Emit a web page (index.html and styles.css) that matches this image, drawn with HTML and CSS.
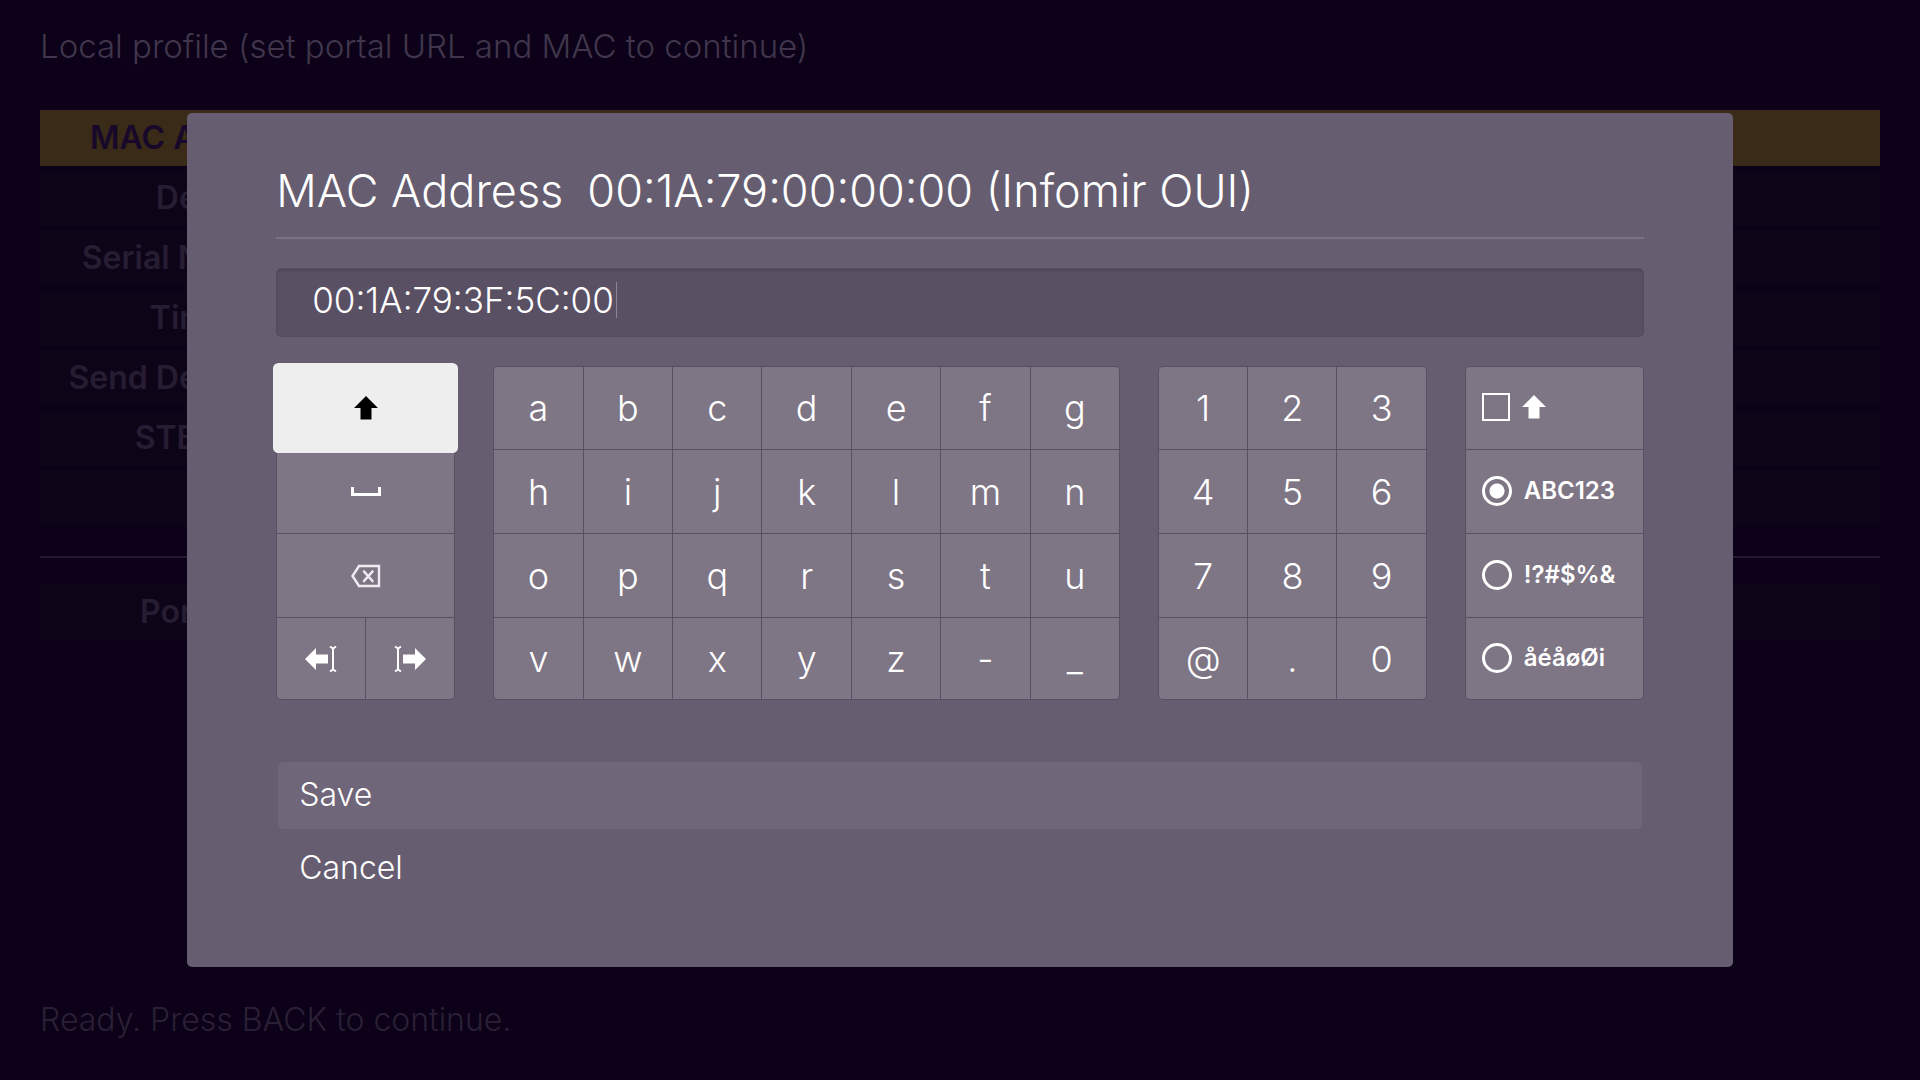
FILE: index.html
```html
<!DOCTYPE html>
<html lang="en">

<head>
    <meta charset="UTF-8">
    <meta name="viewport" content="width=device-width, initial-scale=1.0">
    <title>Local profile</title>
    <link rel="stylesheet" href="styles.css">
</head>

<body>
    <!-- settings page under the dialog -->
    <header class="page-title">Local profile (set portal URL and MAC to continue)</header>
    <main class="settings">
        <ul class="rows">
            <li class="row selected"><span class="label">MAC Address</span></li>
            <li class="row"><span class="label">Device ID</span></li>
            <li class="row"><span class="label">Serial Number</span></li>
            <li class="row"><span class="label">Timezone</span></li>
            <li class="row"><span class="label">Send Device ID</span></li>
            <li class="row"><span class="label">STB Model</span></li>
            <li class="row"></li>
        </ul>
        <hr class="divider">
        <ul class="rows">
            <li class="row"><span class="label">Portal URL</span></li>
        </ul>
    </main>
    <footer class="status">Ready. Press BACK to continue.</footer>

    <!-- keyboard dialog -->
    <div class="overlay">
        <form class="dialog" role="dialog" aria-labelledby="title">
            <h1 class="title" id="title"><span>MAC Address</span><span>00:1A:79:00:00:00 (Infomir OUI)</span></h1>

            <div class="field">
                <input type="text" class="mac" aria-labelledby="title" value="00:1A:79:3F:5C:00">
                <span class="caret"></span>
            </div>

            <div class="keyboard">
                <div class="keys actions">
                    <button type="button" class="key wide focused" aria-label="Shift">
                        <svg width="24" height="24" viewBox="0 0 24 24"><path d="M12 0 24 12H17.500V23.500H6.500V12H0Z" fill="currentColor"/></svg>
                    </button>
                    <button type="button" class="key wide" aria-label="Space">
                        <svg width="30" height="10" viewBox="0 0 30 10"><path d="M1.500 0V7.500H28.500V0" fill="none" stroke="currentColor" stroke-width="3"/></svg>
                    </button>
                    <button type="button" class="key wide" aria-label="Delete">
                        <svg width="30" height="24" viewBox="0 0 30 24"><path d="M8 2H28V22H8L1.500 12Z" fill="none" stroke="#efedf2" stroke-width="2.400"/><path d="M13 7.500 21.500 17M21.500 7.500 13 17" fill="none" stroke="#efedf2" stroke-width="2.600" stroke-linecap="round"/></svg>
                    </button>
                    <button type="button" class="key" aria-label="Cursor left">
                        <svg width="32" height="28" viewBox="0 0 32 28"><path d="M0 14 11 3V9.500H23V18.500H11V25Z" fill="currentColor"/><path d="M25 1.500 28 3.500 31 1.500M28 3V25M25 26.500 28 24.500 31 26.500" fill="none" stroke="currentColor" stroke-width="2"/></svg>
                    </button>
                    <button type="button" class="key" aria-label="Cursor right">
                        <svg width="32" height="28" viewBox="0 0 32 28"><path d="M32 14 21 3V9.500H9V18.500H21V25Z" fill="currentColor"/><path d="M1 1.500 4 3.500 7 1.500M4 3V25M1 26.500 4 24.500 7 26.500" fill="none" stroke="currentColor" stroke-width="2"/></svg>
                    </button>
                </div>

                <div class="keys letters">
                    <button type="button" class="key">a</button>
                    <button type="button" class="key">b</button>
                    <button type="button" class="key">c</button>
                    <button type="button" class="key">d</button>
                    <button type="button" class="key">e</button>
                    <button type="button" class="key">f</button>
                    <button type="button" class="key">g</button>
                    <button type="button" class="key">h</button>
                    <button type="button" class="key">i</button>
                    <button type="button" class="key">j</button>
                    <button type="button" class="key">k</button>
                    <button type="button" class="key">l</button>
                    <button type="button" class="key">m</button>
                    <button type="button" class="key">n</button>
                    <button type="button" class="key">o</button>
                    <button type="button" class="key">p</button>
                    <button type="button" class="key">q</button>
                    <button type="button" class="key">r</button>
                    <button type="button" class="key">s</button>
                    <button type="button" class="key">t</button>
                    <button type="button" class="key">u</button>
                    <button type="button" class="key">v</button>
                    <button type="button" class="key">w</button>
                    <button type="button" class="key">x</button>
                    <button type="button" class="key">y</button>
                    <button type="button" class="key">z</button>
                    <button type="button" class="key">-</button>
                    <button type="button" class="key">_</button>
                </div>

                <div class="keys numbers">
                    <button type="button" class="key">1</button>
                    <button type="button" class="key">2</button>
                    <button type="button" class="key">3</button>
                    <button type="button" class="key">4</button>
                    <button type="button" class="key">5</button>
                    <button type="button" class="key">6</button>
                    <button type="button" class="key">7</button>
                    <button type="button" class="key">8</button>
                    <button type="button" class="key">9</button>
                    <button type="button" class="key">@</button>
                    <button type="button" class="key">.</button>
                    <button type="button" class="key">0</button>
                </div>

                <div class="keys modes">
                    <label class="mode">
                        <input type="checkbox" class="check" aria-label="Caps lock">
                        <svg width="24" height="24" viewBox="0 0 24 24"><path d="M12 0 24 12H17.500V23.500H6.500V12H0Z" fill="currentColor"/></svg>
                    </label>
                    <label class="mode"><input type="radio" name="mode" class="radio" checked>ABC123</label>
                    <label class="mode"><input type="radio" name="mode" class="radio">!?#$%&amp;</label>
                    <label class="mode"><input type="radio" name="mode" class="radio">åéåøØi</label>
                </div>
            </div>

            <div class="buttons">
                <button type="button" class="btn save">Save</button>
                <button type="button" class="btn">Cancel</button>
            </div>
        </form>
    </div>
</body>

</html>
```
FILE: styles.css
```css
* {
    box-sizing: border-box;
}

body {
    margin: 0;
    min-height: 100vh;
    padding: 24px 40px 38px;
    display: flex;
    flex-direction: column;
    background-color: #0c0118;
    font-family: Inter, "Liberation Sans", sans-serif;
    font-weight: 300;
    font-size: 32px;
    line-height: 44px;
}

.page-title {
    color: #40364c;
    font-size: 33px;
}

.settings {
    margin-top: 42px;
}

.rows {
    list-style: none;
    margin: 0;
    padding: 0;
    display: flex;
    flex-direction: column;
    gap: 4px;
}

.row {
    height: 56px;
    display: flex;
    align-items: center;
    background-color: #0e0418;
    color: #271d33;
    font-weight: 600;
}

.row.selected {
    background-color: #3a2a18;
    color: #180829;
}

.label {
    width: 262px;
    text-align: right;
    white-space: nowrap;
}

.divider {
    height: 2px;
    margin: 30px 0 26px;
    border: none;
    background-color: #231a2f;
}

.status {
    margin-top: auto;
    color: #2a2036;
}

/* dialog */
.overlay {
    position: fixed;
    inset: 0;
    display: flex;
    align-items: center;
    justify-content: center;
}

.dialog {
    width: 80.5%;
    padding: 48px 89px 65px;
    border-radius: 5px;
    background-color: #665d70;
    color: #fff;
}

.title {
    margin: 0;
    padding-bottom: 16px;
    display: flex;
    gap: 24px;
    border-bottom: 2px solid #7b7285;
    font-weight: 300;
    font-size: 45px;
    line-height: 60px;
}

.field {
    height: 69px;
    margin-top: 29px;
    padding: 0 35px 6px;
    display: flex;
    align-items: center;
    border: 1px solid #554a5e;
    border-radius: 5px;
    background-color: #5a5064;
    box-shadow: inset 0 2px 2px #50465a;
}

.mac {
    field-sizing: content;
    padding: 0;
    border: none;
    outline: none;
    background: none;
    color: #fff;
    font: inherit;
    font-size: 35px;
}

.caret {
    width: 1px;
    height: 36px;
    margin-left: 2px;
    background-color: #8e8697;
}

.keyboard {
    margin-top: 29px;
    display: grid;
    grid-template-columns: 2fr 7fr 3fr 2fr;
    gap: 38px;
}

.keys {
    display: grid;
    grid-template-rows: 82px 83px 83px 81px;
    gap: 1px;
    border: 1px solid #594f63;
    border-radius: 5px;
    background-color: #594f63;
}

.letters,
.numbers,
.modes {
    overflow: hidden;
}

.actions {
    grid-template-columns: 1fr 1fr;
}

.letters {
    grid-template-columns: repeat(7, 1fr);
}

.numbers {
    grid-template-columns: repeat(3, 1fr);
}

.key {
    padding: 0;
    display: flex;
    align-items: center;
    justify-content: center;
    border: none;
    background-color: #7e7585;
    color: #fff;
    font: inherit;
    font-size: 36px;
}

.actions .key:nth-child(4) {
    border-bottom-left-radius: 4px;
}

.actions .key:nth-child(5) {
    border-bottom-right-radius: 4px;
}

.wide {
    grid-column: span 2;
}

.focused {
    z-index: 1;
    border-radius: 2px;
    background-color: #eee;
    box-shadow: 0 0 0 4px #eee;
    color: #000;
}

.mode {
    padding: 0 0 2px 16px;
    display: flex;
    align-items: center;
    gap: 12px;
    background-color: #7e7585;
    font-weight: 600;
    font-size: 24px;
}

.check,
.radio {
    appearance: none;
    flex: none;
    margin: 0;
    border: 2px solid #fff;
}

.check {
    width: 28px;
    height: 28px;
}

.radio {
    width: 30px;
    height: 30px;
    border-width: 3px;
    border-radius: 50%;
}

.radio:checked {
    background: radial-gradient(circle, #fff 7px, transparent 8px);
}

.buttons {
    margin: 62px 2px 0;
    display: flex;
    flex-direction: column;
    gap: 6px;
}

.btn {
    height: 67px;
    padding: 0 21px 2px;
    border: none;
    border-radius: 5px;
    background: none;
    color: #fff;
    font: inherit;
    text-align: left;
}

.save {
    background-color: #6f6679;
}
```
